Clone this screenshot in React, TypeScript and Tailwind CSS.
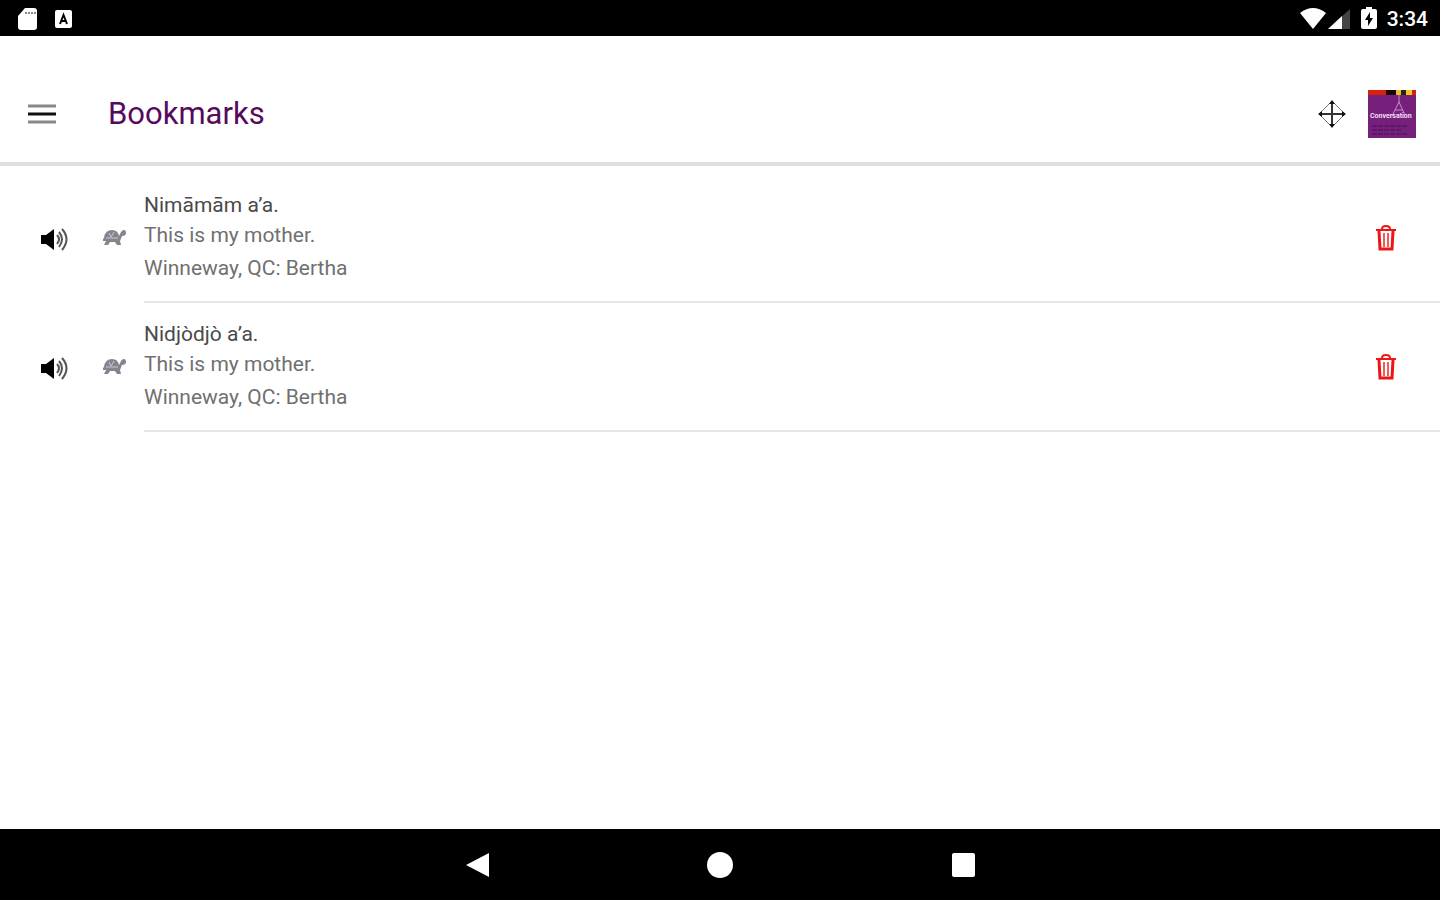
import React, { useState } from 'react';

interface Bookmark {
  id: number;
  phrase: string;
  translation: string;
  speaker: string;
}

const initialBookmarks: Bookmark[] = [
  { id: 1, phrase: 'Nimāmām a’a.', translation: 'This is my mother.', speaker: 'Winneway, QC: Bertha' },
  { id: 2, phrase: 'Nidjòdjò a’a.', translation: 'This is my mother.', speaker: 'Winneway, QC: Bertha' },
];

const StatusBar = () => (
  <div className="flex h-9 shrink-0 items-center justify-between bg-black pt-[2px] pr-3 pl-4 text-white">
    <div className="flex items-center gap-3">
      <svg className="h-6 w-6" viewBox="0 0 24 24" fill="none">
        <path d="M9 1h9a3 3 0 0 1 3 3v16a3 3 0 0 1-3 3H5a3 3 0 0 1-3-3V9z" fill="#fff" />
        <path d="M10 5v2M13 5v2M16 5v2M19 5v2" stroke="#888" strokeWidth="2" />
      </svg>
      <svg className="h-6 w-6" viewBox="0 0 24 24">
        <rect x="3" y="3" width="17" height="18" rx="2" fill="#fff" />
        <path d="M8 17l3.500-9 3.500 9M9.500 14h4" stroke="#000" strokeWidth="2" fill="none" />
      </svg>
    </div>
    <div className="flex items-center">
      <svg className="h-6 w-7" viewBox="0 0 28 24">
        <path d="M1 6Q14-4 27 6L14 22z" fill="#fff" />
      </svg>
      <svg className="h-6 w-6" viewBox="0 0 24 24">
        <path d="M23 2v20H1z" fill="#444" />
        <path d="M15 9v13H1z" fill="#fff" />
      </svg>
      <svg className="ml-2 h-6 w-5" viewBox="0 0 20 24">
        <path d="M7 0h6v2h3a2 2 0 0 1 2 2v16a2 2 0 0 1-2 2H4a2 2 0 0 1-2-2V4a2 2 0 0 1 2-2h3z" fill="#fff" />
        <path d="M11 5v6h3l-5 8v-6H6z" fill="#000" />
      </svg>
      <span className="ml-2 text-[21px] leading-8 font-medium">3:34</span>
    </div>
  </div>
);

const MoveIcon = () => (
  <svg className="h-8 w-8" viewBox="0 0 32 32" fill="none" stroke="#333">
    <path d="M16 4v24M4 16h24" strokeWidth="2" />
    <path d="M16 3L29 16 16 29 3 16z" strokeWidth="1" stroke="#777" />
    <path d="M16 2l3 4H13zM16 30l3-4H13zM2 16l4-3v6zM30 16l-4-3v6z" fill="#111" stroke="none" />
  </svg>
);

const AppLogo = () => (
  <svg className="h-12 w-12" viewBox="0 0 48 48">
    <rect width="48" height="48" fill="#76207c" />
    <rect width="18" height="5" fill="#d8200c" />
    <rect x="18" width="10" height="5" fill="#180608" />
    <rect x="28" width="5" height="5" fill="#e8c030" />
    <rect x="33" width="5" height="5" fill="#33200c" />
    <rect x="38" width="6" height="5" fill="#f0c820" />
    <rect x="44" width="4" height="5" fill="#d8200c" />
    <path d="M31 5v8M31 12l-7 14M31 12l6 13M27 20h8" stroke="#c58bc9" fill="none" />
    <text x="2" y="28" fontSize="7" fontWeight="700" fill="#f3dff3">Conversation</text>
    <path d="M4 36h36M4 40h30M4 44h36" stroke="#5e1768" strokeWidth="2" strokeDasharray="5 1" />
  </svg>
);

const SpeakerIcon = () => (
  <svg className="h-7 w-7" viewBox="0 0 28 28">
    <path d="M1 10h5l8-6v21l-8-6H1z" fill="#000" />
    <path d="M17 10q4 4 0 9M19 7q6 7 0 15M22 4q9 10 0 21" stroke="#555" strokeWidth="2" fill="none" />
  </svg>
);

const TurtleIcon = () => (
  <svg className="h-6 w-6" viewBox="0 0 24 24" fill="#85858f">
    <path d="M2 11Q3 3 10 3q6 0 7 6l2-4q1-2 3-2 2 0 2 3t-4 3l-2 5 1 4h-4l-2-3H8l-2 3H2l2-4H1v-2z" />
    <path d="M4 11h12M7 6l2 4 3-5" stroke="#c9c9d0" fill="none" />
  </svg>
);

const TrashIcon = () => (
  <svg className="h-7 w-6" viewBox="0 0 24 28" fill="none" stroke="#ee1515">
    <path d="M2 6h20" strokeWidth="2" />
    <path d="M8 5q0-3 4-3t4 3" strokeWidth="2" />
    <path d="M5 7l1 18h12l1-18" strokeWidth="3" />
    <path d="M10 9v14M14 9v14" strokeWidth="2" opacity="0.700" />
  </svg>
);

interface BookmarkRowProps {
  bookmark: Bookmark;
  onDelete: (id: number) => void;
}

const BookmarkRow: React.FC<BookmarkRowProps> = ({ bookmark, onDelete }) => (
  <li className="flex pl-10">
    <div className="flex w-26 shrink-0 items-center gap-[34px]">
      <button aria-label="Play">
        <SpeakerIcon />
      </button>
      <button aria-label="Play slowly">
        <TurtleIcon />
      </button>
    </div>
    <div className="flex flex-1 items-center justify-between border-b-2 border-[#e6e6e6] pr-[42px]">
      <div className="pt-4 pb-[15px] text-[21px] text-[#707070]">
        <h2 className="leading-[30px] text-[#4a4a4a]">{bookmark.phrase}</h2>
        <p className="leading-[30px]">{bookmark.translation}</p>
        <p className="leading-9">{bookmark.speaker}</p>
      </div>
      <button aria-label="Delete bookmark" onClick={() => onDelete(bookmark.id)}>
        <TrashIcon />
      </button>
    </div>
  </li>
);

const App = () => {
  const [bookmarks, setBookmarks] = useState(initialBookmarks);

  const handleDelete = (id: number) => {
    setBookmarks(bookmarks.filter(bookmark => bookmark.id !== id));
  };

  return (
    <div className="flex min-h-screen flex-col bg-white font-[Roboto,sans-serif]">
      <StatusBar />

      {/* Header */}
      <header className="flex items-center justify-between border-b-4 border-[#e0e0e0] pt-[30px] pr-6 pl-7">
        <div className="flex items-center gap-13">
          <button aria-label="Open menu">
            <svg className="h-7 w-7" viewBox="0 0 28 28" strokeWidth="3">
              <path d="M0 6h28M0 22h28" stroke="#888" />
              <path d="M0 14h28" stroke="#111" />
            </svg>
          </button>
          <h1 className="text-[31px] leading-[96px] text-[#560a5e]">Bookmarks</h1>
        </div>
        <div className="flex items-center gap-5">
          <button aria-label="Move">
            <MoveIcon />
          </button>
          <AppLogo />
        </div>
      </header>

      {/* Bookmark list */}
      <main className="flex-1 pt-2">
        <ul>
          {bookmarks.map(bookmark => (
            <BookmarkRow key={bookmark.id} bookmark={bookmark} onDelete={handleDelete} />
          ))}
        </ul>
      </main>

      {/* System navigation */}
      <nav className="flex h-[71px] items-center justify-center gap-54 bg-black">
        <button aria-label="Back">
          <svg className="h-8 w-7" viewBox="0 0 28 32">
            <path d="M27 4v24L4 16z" fill="#fff" />
          </svg>
        </button>
        <button aria-label="Home">
          <svg className="h-8 w-7" viewBox="0 0 28 32">
            <circle cx="14" cy="16" r="13" fill="#fff" />
          </svg>
        </button>
        <button aria-label="Recent apps">
          <svg className="h-8 w-7" viewBox="0 0 28 32">
            <rect x="2" y="4" width="23" height="24" rx="2" fill="#fff" />
          </svg>
        </button>
      </nav>
    </div>
  );
};

export default App;
